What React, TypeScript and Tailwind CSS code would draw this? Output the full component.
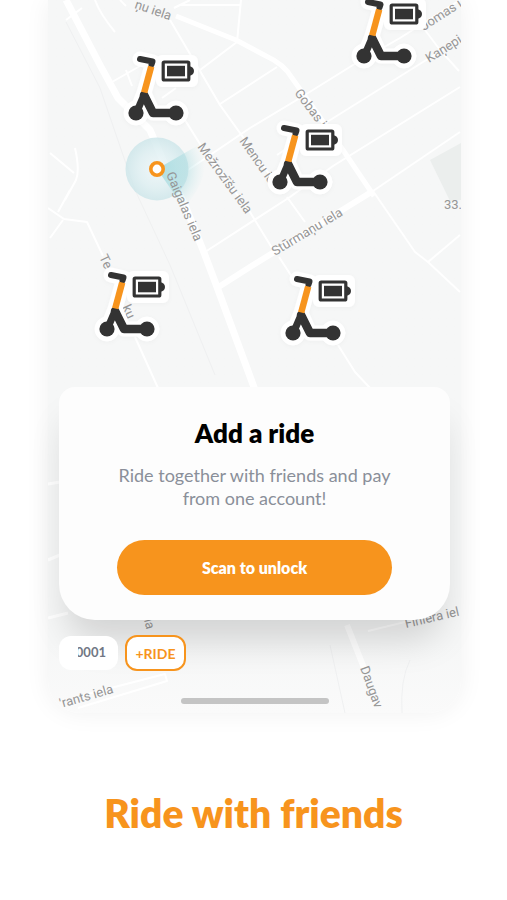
const roads = [
  { width: 7, d: "M66 0 L100 65 L118 98 L150 130 L165 165 L185 205 L203 250 L217 287 L255 390" },
  { width: 5, d: "M176 16 L236 40 L266 56 Q284 64 292 78 L322 120 L343 150 L374 196" },
  { width: 6, d: "M217 288 L250 267 L373 191" },
  { width: 2, d: "M373 191 L460 132" },
  { width: 2, d: "M373 191 L415 252 L428 262 L460 292 M428 262 L460 235" },
  { width: 2, d: "M205 252 L290 197 L333 166 L460 87" },
  { width: 2, d: "M188 170 L250 128 L300 98 L353 65 L400 38 L460 0" },
  { width: 2, d: "M277 155 L327 122 L423 62 L460 40" },
  { width: 2, d: "M220 104 L277 67 M200 70 L237 42 L241 0 M170 20 L220 105 L240 133 L275 182" },
  { width: 2, d: "M185 120 L200 144 L250 212 L272 248 M287 197 L305 222 M279 257 L294 280" },
  { width: 2, d: "M95 0 Q100 14 115 32 M120 0 L126 6 M180 5 L240 5 M174 8 L190 0" },
  { width: 2, d: "M50 153 L74 173 M75 148 Q80 170 76 180 L65 200 M48 208 L64 219 L87 222 L103 256 M70 190 L58 212 M63 220 L50 238" },
  { width: 2, d: "M135 337 L158 388 M338 345 L355 372 L370 388 M112 82 L140 66 M126 70 L132 86 M162 98 L176 88 M66 20 L82 8" },
  { width: 2, d: "M425 30 L440 50 L459 71" },
  { width: 3, d: "M48 484 L60 482 M48 560 L60 555 M48 618 L68 613" },
  { width: 6, d: "M347 625 L364 668" },
  { width: 2, d: "M368 631 L405 622 M76 697 L165 674 L167 681 L78 708" },
];

const labels = [
  { text: "ņu iela", x: 134, y: 8, angle: 19 },
  { text: "Gobas i", x: 294, y: 93, angle: 53 },
  { text: "Mencu ie", x: 239, y: 141, angle: 55 },
  { text: "Mežrozīšu iela", x: 197, y: 147, angle: 54 },
  { text: "Gaigalas iela", x: 166, y: 174, angle: 67 },
  { text: "Te", x: 99, y: 257, angle: 64 },
  { text: "ku", x: 122, y: 307, angle: 66 },
  { text: "Stūrmaņu iela", x: 275, y: 256, angle: -31 },
  { text: "Jomas i", x: 424, y: 31, angle: -33 },
  { text: "Kaņepi", x: 429, y: 63, angle: -32 },
  { text: "33.", x: 444, y: 209, angle: 0 },
  { text: "'rants iela", x: 61, y: 708, angle: -16 },
  { text: "Finiera iel", x: 406, y: 628, angle: -13 },
  { text: "ia", x: 144, y: 620, angle: 75 },
  { text: "Daugav", x: 360, y: 668, angle: 70 },
];

const scooters = [
  { x: 136, y: 113 },
  { x: 364, y: 56 },
  { x: 280, y: 182 },
  { x: 107, y: 329 },
  { x: 293, y: 333 },
];

function Scooter({ x, y }: { x: number; y: number }) {
  return (
    <g transform={`translate(${x} ${y})`} strokeLinecap="round" strokeLinejoin="round">
      {/* White outline */}
      <g fill="#fff" stroke="#fff" filter="url(#pin-shadow)">
        <path d="M4 -54 L17 -51 L8 -20 L0 0 M8 -20 L17 0 L40 0" fill="none" strokeWidth="15" />
        <circle r="12" />
        <circle cx="40" r="12" />
        <rect x="26" y="-52" width="30" height="20" strokeWidth="12" />
      </g>

      {/* Body */}
      <g fill="none" stroke="#333">
        <path d="M4 -54 L16.5 -51.5 L15.5 -48.5" strokeWidth="6" />
        <path d="M8 -18 L2 -4" strokeWidth="7" />
        <path d="M8 -18 L17 0 L40 0" strokeWidth="8.5" />
      </g>
      <path d="M15.2 -46.5 L8.2 -20.5" stroke="#f7941d" strokeWidth="6.5" strokeLinecap="butt" />
      <circle r="7.6" fill="#333" />
      <circle cx="40" r="7.6" fill="#333" />

      {/* Battery */}
      <rect x="27.2" y="-51" width="25.6" height="18" rx="1" fill="#fff" stroke="#333" strokeWidth="3.2" />
      <rect x="31" y="-47.2" width="18" height="10.5" fill="#333" />
      <path d="M53 -47 Q58 -46 58 -42 Q58 -38 53 -37 Z" fill="#333" />
    </g>
  );
}

function CityMap() {
  return (
    <svg
      className="absolute inset-0 w-full h-full rounded-b-[32px]"
      viewBox="48 0 413 714"
      preserveAspectRatio="xMidYMin slice"
      aria-hidden="true"
    >
      <defs>
        <filter id="pin-shadow" x="-30%" y="-30%" width="160%" height="160%">
          <feDropShadow dx="0" dy="1" stdDeviation="2" floodColor="#000" floodOpacity="0.03" />
        </filter>
        <radialGradient id="halo">
          <stop offset="0" stopColor="#eef6f8" />
          <stop offset="0.6" stopColor="#dceef1" />
          <stop offset="1" stopColor="#cbe5e9" />
        </radialGradient>
        <radialGradient id="beam" gradientUnits="userSpaceOnUse" cx="157" cy="169" r="48">
          <stop offset="0" stopColor="#8fd3d9" stopOpacity="0.9" />
          <stop offset="0.6" stopColor="#a4dade" stopOpacity="0.6" />
          <stop offset="1" stopColor="#c6e9ec" stopOpacity="0" />
        </radialGradient>
      </defs>

      <path d="M430 160 L461 143 V200 L450 201 Z" fill="#ebeeed" />
      <g fill="none" stroke="#eff0f1" strokeWidth="1">
        <path d="M66 22 L100 88 L135 190 L170 265 L215 375" />
        <path d="M330 645 L345 713 M410 660 Q400 680 402 713" />
      </g>

      <g fill="none" stroke="#fff" strokeLinejoin="round">
        {roads.map((road) => (
          <path key={road.d} d={road.d} strokeWidth={road.width} />
        ))}
      </g>

      {/* Current position */}
      <circle cx="157" cy="169" r="31.5" fill="url(#halo)" fillOpacity="0.8" />
      <path d="M157 169 L202 143 Q214 174 184 208 Z" fill="url(#beam)" fillOpacity="0.8" />

      <g className="font-['Roboto',sans-serif] text-[13px]" fill="#969696">
        {labels.map((label) => (
          <text key={label.text} transform={`translate(${label.x} ${label.y}) rotate(${label.angle})`}>
            {label.text}
          </text>
        ))}
      </g>

      <circle cx="157" cy="169" r="6.2" fill="#fff" stroke="#f7941d" strokeWidth="3.6" />

      {scooters.map((scooter) => (
        <Scooter key={scooter.x} x={scooter.x} y={scooter.y} />
      ))}
    </svg>
  );
}

export default function App() {
  return (
    <div className="min-h-screen bg-white font-['Lato',sans-serif]">
      <main>
        {/* Map Section */}
        <section className="relative ml-12 mr-[46px] px-[11px] pt-[387px] pb-[9px] bg-linear-to-b from-[#f6f7f7] from-90% to-[#fafafa] rounded-b-[32px] shadow-[0_0_26px_#f1f1f1]">
          <CityMap />

          {/* Ride Card */}
          <div className="relative bg-[#fdfdfd] rounded-t-2xl rounded-b-[36px] px-[58px] pt-[30px] pb-[25px] text-center shadow-[0_28px_36px_-8px_rgba(0,0,0,0.15)]">
            <h1 className="text-[26px] leading-8 font-extrabold text-black">Add a ride</h1>
            <p className="mt-[15px] -mx-3 text-[18px] leading-[23px] text-[#8a8f99]">
              Ride together with friends and pay
              <br />
              from one account!
            </p>
            <button className="mt-[30px] w-full h-[55px] rounded-full bg-[#f7941d] text-[16px] font-extrabold text-white">
              Scan to unlock
            </button>
          </div>

          {/* Ride Chips */}
          <div className="relative mt-[15px] flex items-center gap-[7px]">
            <button className="w-[59px] h-[34px] pr-3 flex items-center justify-end rounded-xl bg-white text-[13px] font-bold text-[#717784]">
              <span className="w-7 flex justify-end overflow-hidden">0001</span>
            </button>
            <button className="w-[61px] h-9 rounded-xl border-2 border-[#f7941d] bg-white text-[14px] font-bold text-[#f7941d]">
              +RIDE
            </button>
          </div>

          {/* Home Indicator */}
          <div className="relative mt-[27px] mx-auto w-[148px] h-[6px] rounded-full bg-[#c4c4c4]"></div>
        </section>

        <h2 className="pt-[76px] pb-12 text-center text-[39px] leading-[48px] font-extrabold text-[#f7941d]">
          Ride with friends
        </h2>
      </main>
    </div>
  );
}
